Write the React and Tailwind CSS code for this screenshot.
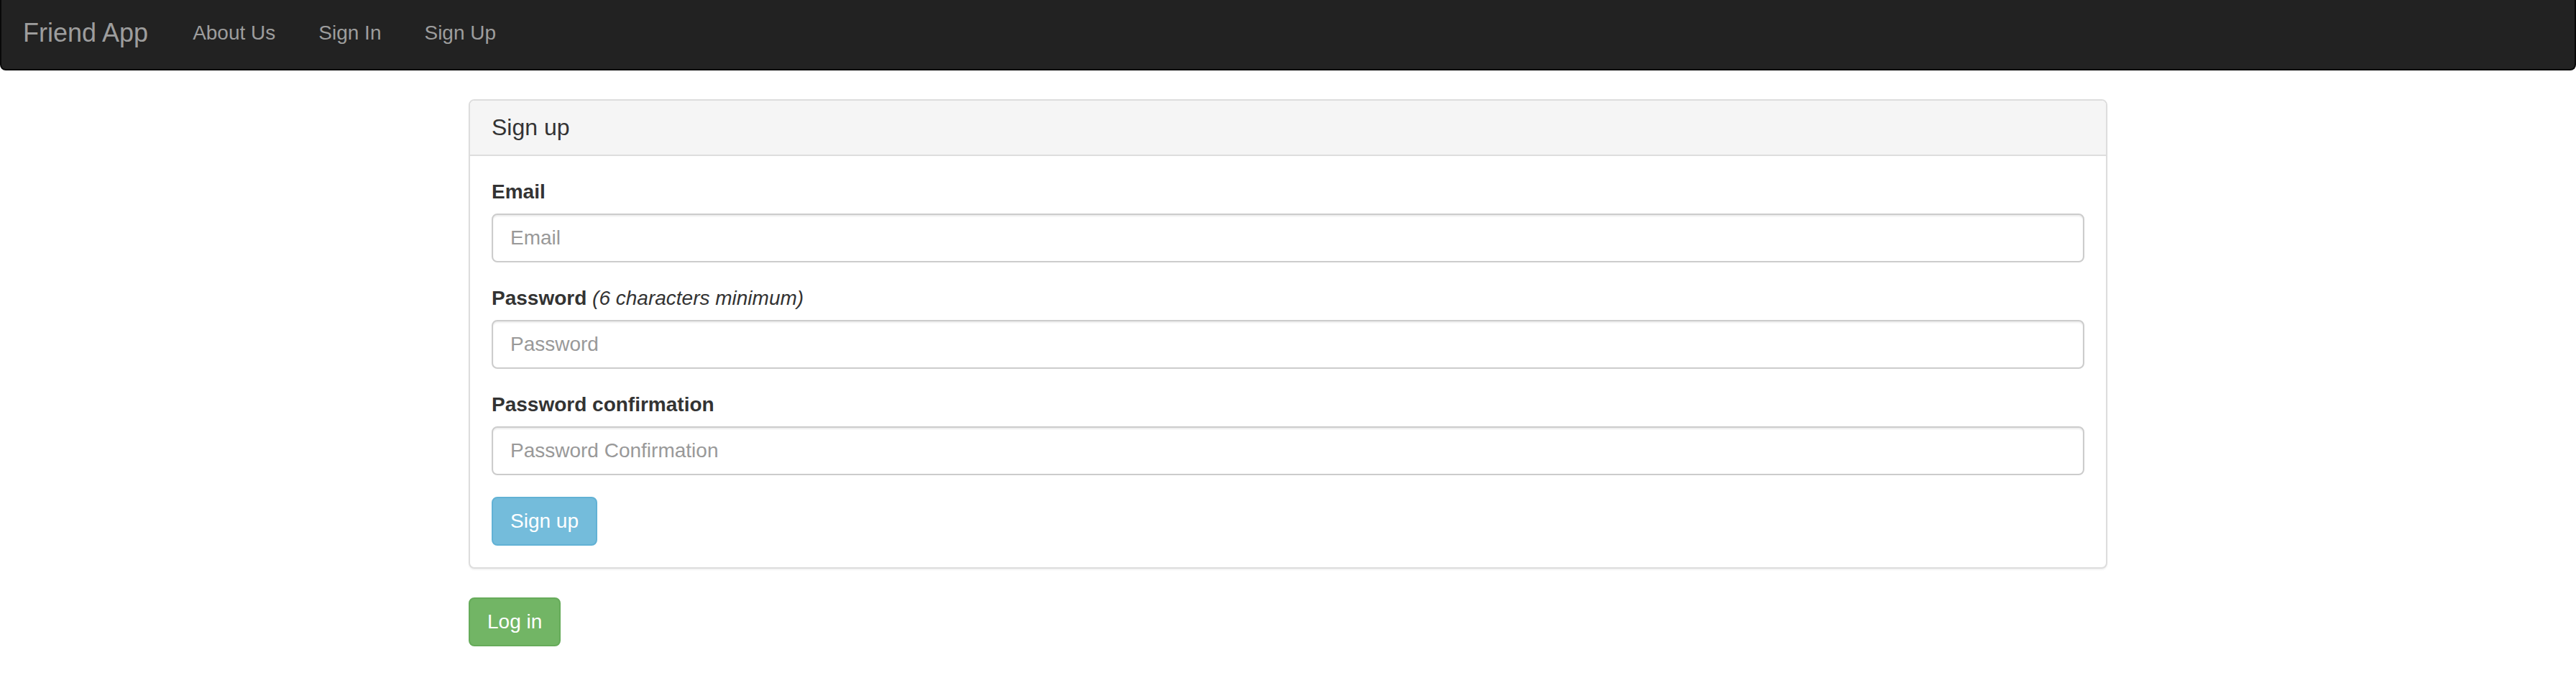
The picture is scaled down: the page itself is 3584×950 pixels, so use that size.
import { useState } from 'react'

const NAV_LINKS = ['About Us', 'Sign In', 'Sign Up']

function Field({ label, hint, placeholder, type = 'text' }) {
  const [value, setValue] = useState('')
  return (
    <div className="mb-[30px]">
      <label className="inline-block mb-[10px] font-bold text-[28px] leading-[40px]">
        {label}
        {hint && <em className="font-normal"> {hint}</em>}
      </label>
      <input
        type={type}
        value={value}
        onChange={(e) => setValue(e.target.value)}
        placeholder={placeholder}
        className="block w-full h-[68px] px-[24px] py-[12px] text-[28px] leading-[40px] text-[#555] bg-white border-2 border-[#ccc] rounded-[8px] shadow-[inset_0_2px_2px_rgba(0,0,0,0.075)] placeholder:text-[#999] outline-none"
      />
    </div>
  )
}

export default function App() {
  return (
    <div className="min-h-[950px] bg-white text-[#333] font-['Liberation_Sans',Arial,sans-serif] text-[28px] leading-[40px]">
      {/* Navbar */}
      <nav className="h-[98px] bg-[#222] border-x-2 border-b-2 border-[#080808] rounded-b-[8px] flex items-start pt-[26px] px-[30px]">
        <a className="text-[36px] leading-[40px] text-[#9d9d9d] pr-[32px]">Friend App</a>
        <ul className="flex">
          {NAV_LINKS.map((l) => (
            <li key={l}>
              <a className="block px-[30px] text-[28px] leading-[40px] text-[#9d9d9d]">{l}</a>
            </li>
          ))}
        </ul>
      </nav>

      {/* Content */}
      <div className="w-[2340px] mx-auto px-[30px] pt-[40px]">
        <div className="bg-white border-2 border-[#ddd] rounded-[8px] shadow-[0_2px_2px_rgba(0,0,0,0.05)] mb-[40px]">
          <div className="bg-[#f5f5f5] border-b-2 border-[#ddd] rounded-t-[6px] px-[30px] py-[20px]">
            <h3 className="text-[32px] leading-[35px] text-[#333]">Sign up</h3>
          </div>
          <div className="p-[30px]">
            <Field label="Email" placeholder="Email" type="email" />
            <Field label="Password" hint="(6 characters minimum)" placeholder="Password" type="password" />
            <Field label="Password confirmation" placeholder="Password Confirmation" type="password" />
            <button className="px-[24px] py-[12px] text-[28px] leading-[40px] text-white bg-[#74bcdb] border-2 border-[#62b2d5] rounded-[8px]">
              Sign up
            </button>
          </div>
        </div>
        <button className="px-[24px] py-[12px] text-[28px] leading-[40px] text-white bg-[#72b565] border-2 border-[#66ab5a] rounded-[8px]">
          Log in
        </button>
      </div>
    </div>
  )
}
